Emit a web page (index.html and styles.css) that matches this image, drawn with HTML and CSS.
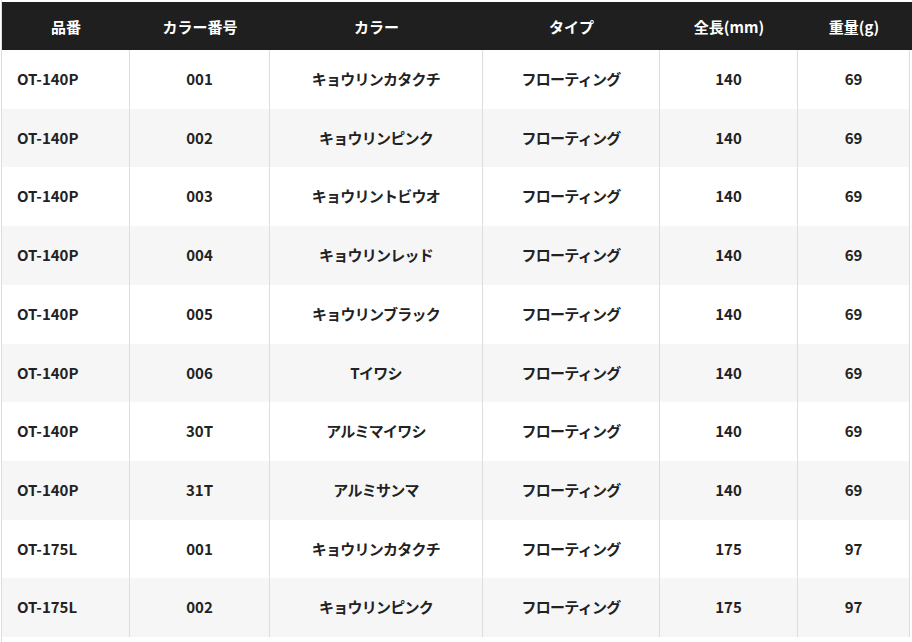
FILE: index.html
```html
<!DOCTYPE html>
<html lang="ja">
<head>
<meta charset="utf-8">
<title>スペック表</title>
<link rel="stylesheet" href="styles.css">
</head>
<body>
<div class="spec-wrap">
  <table class="spec">
    <colgroup>
      <col class="c1"><col class="c2"><col class="c3"><col class="c4"><col class="c5"><col class="c6">
    </colgroup>
    <thead>
      <tr><th>品番</th><th>カラー番号</th><th>カラー</th><th>タイプ</th><th>全長(mm)</th><th>重量(g)</th></tr>
    </thead>
    <tbody>
      <tr><td>OT-140P</td><td>001</td><td>キョウリンカタクチ</td><td>フローティング</td><td>140</td><td>69</td></tr>
      <tr><td>OT-140P</td><td>002</td><td>キョウリンピンク</td><td>フローティング</td><td>140</td><td>69</td></tr>
      <tr><td>OT-140P</td><td>003</td><td>キョウリントビウオ</td><td>フローティング</td><td>140</td><td>69</td></tr>
      <tr><td>OT-140P</td><td>004</td><td>キョウリンレッド</td><td>フローティング</td><td>140</td><td>69</td></tr>
      <tr><td>OT-140P</td><td>005</td><td>キョウリンブラック</td><td>フローティング</td><td>140</td><td>69</td></tr>
      <tr><td>OT-140P</td><td>006</td><td>Tイワシ</td><td>フローティング</td><td>140</td><td>69</td></tr>
      <tr><td>OT-140P</td><td>30T</td><td>アルミマイワシ</td><td>フローティング</td><td>140</td><td>69</td></tr>
      <tr><td>OT-140P</td><td>31T</td><td>アルミサンマ</td><td>フローティング</td><td>140</td><td>69</td></tr>
      <tr><td>OT-175L</td><td>001</td><td>キョウリンカタクチ</td><td>フローティング</td><td>175</td><td>97</td></tr>
      <tr><td>OT-175L</td><td>002</td><td>キョウリンピンク</td><td>フローティング</td><td>175</td><td>97</td></tr>
    </tbody>
  </table>
</div>
</body>
</html>
```
FILE: styles.css
```css
html {
  overflow: hidden;
}
body {
  margin: 0;
  background: #fff;
  font-family: "Noto Sans CJK JP", "Noto Sans", sans-serif;
  color: #222;
}
.spec-wrap {
  margin-left: 1px;
  padding-top: 2px;
  border-left: 1px solid #ddd;
  min-height: 642px;
}
.spec {
  table-layout: fixed;
  width: 908px;
  border-collapse: separate;
  border-spacing: 0;
  font-size: 15px;
  font-weight: 700;
}
.c1 { width: 128px; }
.c2 { width: 140px; }
.c3 { width: 213px; }
.c4 { width: 177px; }
.c5 { width: 138px; }
.c6 { width: 112px; }
.spec th,
.spec td {
  box-sizing: border-box;
  text-align: center;
  white-space: nowrap;
}
.spec th {
  background: #1f1f1f;
  color: #fff;
  padding: 13px 0 12px;
  line-height: 23px;
}
.spec th:last-child {
  box-shadow: 3px 0 0 #1f1f1f;
}
.spec td {
  padding: 18px 0;
  line-height: 22.7px;
  border-right: 1px solid #ddd;
}
.spec td:first-child {
  text-align: left;
  padding-left: 15px;
}
.spec td:nth-child(3),
.spec td:nth-child(4) {
  letter-spacing: -0.05em;
}
.spec tbody tr:nth-child(even) td {
  background: #f6f6f6;
}
```
